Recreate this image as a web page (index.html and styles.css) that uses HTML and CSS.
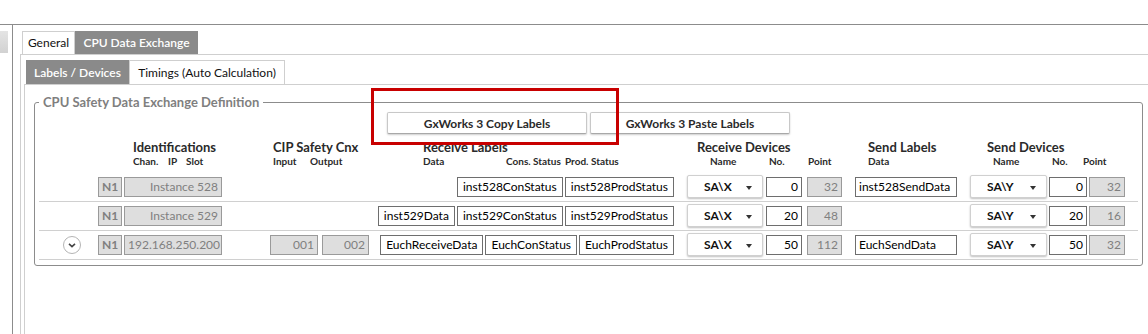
FILE: index.html
```html
<!DOCTYPE html>
<html lang="en">
<head>
    <meta charset="UTF-8">
    <title>CPU Data Exchange</title>
    <link rel="stylesheet" href="styles.css">
</head>
<body>
    <div class="window">
        <div class="sidebar"><div class="side-tab"></div></div>
        <div class="main">
            <div class="tabs">
                <div class="tab tab-general">General</div>
                <div class="tab tab-cpu active">CPU Data Exchange</div>
            </div>
            <div class="panel">
                <div class="tabs sub">
                    <div class="tab tab-labels active">Labels / Devices</div>
                    <div class="tab tab-timings">Timings (Auto Calculation)</div>
                </div>
                <div class="subpanel">
                    <fieldset class="group">
                        <legend>CPU Safety Data Exchange Definition</legend>

                        <div class="actions">
                            <span class="marked">
                                <button class="btn">GxWorks 3 Copy Labels</button>
                                <span class="highlight"></span>
                            </span>
                            <button class="btn">GxWorks 3 Paste Labels</button>
                        </div>

                        <div class="head">
                            <div class="hg hg-id">
                                <div class="ht">Identifications</div>
                                <div class="hs"><span class="w35">Chan.</span><span class="w18">IP</span><span>Slot</span></div>
                            </div>
                            <div class="hg hg-cip">
                                <div class="ht">CIP Safety Cnx</div>
                                <div class="hs"><span class="w37">Input</span><span>Output</span></div>
                            </div>
                            <div class="hg hg-rl">
                                <div class="ht">Receive Labels</div>
                                <div class="hs"><span class="w83">Data</span><span class="w59">Cons. Status</span><span>Prod. Status</span></div>
                            </div>
                            <div class="hg hg-rd">
                                <div class="ht">Receive Devices</div>
                                <div class="hs ind13"><span class="w59">Name</span><span class="w39">No.</span><span>Point</span></div>
                            </div>
                            <div class="hg hg-sl">
                                <div class="ht">Send Labels</div>
                                <div class="hs"><span>Data</span></div>
                            </div>
                            <div class="hg hg-sd">
                                <div class="ht">Send Devices</div>
                                <div class="hs ind6"><span class="w59">Name</span><span class="w31">No.</span><span>Point</span></div>
                            </div>
                        </div>

                        <div class="row">
                            <span class="c-chev"></span>
                            <span class="c-chan field off">N1</span>
                            <span class="c-id field off">Instance 528</span>
                            <span class="c-in"></span>
                            <span class="c-out"></span>
                            <span class="c-rl">
                                <span class="field lbl">inst528ConStatus</span>
                                <span class="field lbl">inst528ProdStatus</span>
                            </span>
                            <span class="c-sel1 select">SA\X<i class="caret"></i></span>
                            <span class="c-no1 field num">0</span>
                            <span class="c-pt1 field off num">32</span>
                            <span class="c-sl field">inst528SendData</span>
                            <span class="c-sel2 select">SA\Y<i class="caret"></i></span>
                            <span class="c-no2 field num">0</span>
                            <span class="c-pt2 field off num">32</span>
                        </div>

                        <div class="row">
                            <span class="c-chev"></span>
                            <span class="c-chan field off">N1</span>
                            <span class="c-id field off">Instance 529</span>
                            <span class="c-in"></span>
                            <span class="c-out"></span>
                            <span class="c-rl">
                                <span class="field lbl">inst529Data</span>
                                <span class="field lbl">inst529ConStatus</span>
                                <span class="field lbl">inst529ProdStatus</span>
                            </span>
                            <span class="c-sel1 select">SA\X<i class="caret"></i></span>
                            <span class="c-no1 field num">20</span>
                            <span class="c-pt1 field off num">48</span>
                            <span class="c-sl"></span>
                            <span class="c-sel2 select">SA\Y<i class="caret"></i></span>
                            <span class="c-no2 field num">20</span>
                            <span class="c-pt2 field off num">16</span>
                        </div>

                        <div class="row">
                            <span class="c-chev">
                                <svg width="18" height="18" viewBox="0 0 18 18">
                                    <circle cx="9" cy="9" r="8.5" fill="#fff" stroke="#b4b4b4"/>
                                    <path d="M6 7.8 L9 10.6 L12 7.8" fill="none" stroke="#444" stroke-width="1.6"/>
                                </svg>
                            </span>
                            <span class="c-chan field off">N1</span>
                            <span class="c-id field off">192.168.250.200</span>
                            <span class="c-in field off num">001</span>
                            <span class="c-out field off num">002</span>
                            <span class="c-rl">
                                <span class="field lbl">EuchReceiveData</span>
                                <span class="field lbl">EuchConStatus</span>
                                <span class="field lbl">EuchProdStatus</span>
                            </span>
                            <span class="c-sel1 select">SA\X<i class="caret"></i></span>
                            <span class="c-no1 field num">50</span>
                            <span class="c-pt1 field off num">112</span>
                            <span class="c-sl field">EuchSendData</span>
                            <span class="c-sel2 select">SA\Y<i class="caret"></i></span>
                            <span class="c-no2 field num">50</span>
                            <span class="c-pt2 field off num">32</span>
                        </div>
                    </fieldset>
                </div>
            </div>
        </div>
    </div>
</body>
</html>
```

FILE: styles.css
```css
body {
    margin: 0;
    font-family: "Lato", "Noto Sans", sans-serif;
    font-size: 12px;
    color: #1a1a1a;
    background: #fff;
}
.window {
    margin-top: 24px;
    border-top: 1px solid #8c8c8c;
    display: flex;
    height: 309px;
}
.sidebar {
    width: 12px;
    border-right: 1px solid #8c8c8c;
}
.side-tab {
    margin-top: 6px;
    width: 8px;
    height: 22px;
    background: linear-gradient(#e4e4e4, #d2d2d2);
}
.main {
    flex: 1;
    padding-top: 6px;
    display: flex;
    flex-direction: column;
}
.tabs {
    display: flex;
    padding-left: 9px;
}
.tab {
    box-sizing: border-box;
    height: 23px;
    line-height: 22px;
    text-align: center;
    border: 1px solid #cfcfcf;
    border-bottom: none;
    background: #fff;
    color: #111;
}
.tab.active {
    background: #8a8a8a;
    border-color: #8a8a8a;
    color: #fff;
    font-weight: 600;
}
.tab-general { width: 53px; }
.tab-cpu { width: 123px; }
.panel {
    flex: 1;
    margin-left: 7px;
    padding-top: 5px;
    border-top: 1px solid #cfcfcf;
    border-left: 1px solid #cfcfcf;
    display: flex;
    flex-direction: column;
}
.tabs.sub {
    padding-left: 5px;
}
.tabs.sub .tab {
    height: 24px;
    line-height: 23px;
}
.tab-labels { width: 103px; }
.tab-timings { width: 156px; }
.subpanel {
    flex: 1;
    margin-left: 3px;
    padding: 9px 5px 0 9px;
    border-top: 1px solid #cfcfcf;
    border-left: 1px solid #cfcfcf;
}
.group {
    margin: 0;
    padding: 2px 4px 5px;
    border: 1px solid #8c8c8c;
    border-radius: 3px;
}
.group legend {
    padding: 0 4px;
    font-size: 13px;
    line-height: 16px;
    font-weight: 700;
    color: #7f7f7f;
}
.actions {
    display: flex;
    justify-content: center;
    gap: 3px;
}
.marked {
    position: relative;
    display: flex;
}
.btn {
    box-sizing: border-box;
    width: 200px;
    height: 22px;
    padding: 0;
    font-family: inherit;
    font-size: 12px;
    font-weight: 700;
    color: #2a2a2a;
    background: #fff;
    border: 1px solid #c8c8c8;
    border-bottom-color: #a8a8a8;
    border-radius: 2px;
    box-shadow: 0 1px 2px rgba(0, 0, 0, 0.2);
}
.highlight {
    position: absolute;
    left: -16px;
    top: -24px;
    width: 248px;
    height: 57px;
    box-sizing: border-box;
    border: 3px solid #c80000;
    pointer-events: none;
}
.head {
    display: flex;
    height: 34px;
    margin-top: 5px;
    color: #2a2a2a;
    font-weight: 700;
}
.ht {
    font-size: 13px;
    line-height: 16px;
    white-space: nowrap;
}
.hs {
    display: flex;
    font-size: 10px;
    line-height: 13px;
    white-space: nowrap;
}
.hs span { flex: none; }
.hg-id { margin-left: 94px; width: 140px; }
.hg-cip { width: 150px; }
.hg-rl { width: 274px; }
.hg-rd { width: 171px; }
.hg-sl { width: 119px; }
.ind13 { padding-left: 13px; }
.ind6 { padding-left: 6px; }
.w18 { width: 18px; }
.w31 { width: 31px; }
.w35 { width: 35px; }
.w37 { width: 37px; }
.w39 { width: 39px; }
.w59 { width: 59px; }
.w83 { width: 83px; }
.row {
    display: flex;
    align-items: center;
    padding: 4px 0;
    border-bottom: 1px solid #d0d0d0;
}
.row > span { flex: none; }
.field {
    box-sizing: border-box;
    height: 20px;
    line-height: 18px;
    padding: 0 3px;
    border: 1px solid #6e6e6e;
    background: #fff;
    color: #000;
    white-space: nowrap;
    overflow: hidden;
}
.field.off {
    background: #dedede;
    border-color: #9a9a9a;
    color: #808080;
    text-align: right;
}
.num { text-align: right; }
.c-chan.off { text-align: center; padding: 0; font-weight: 700; }
.c-chev { width: 18px; height: 18px; margin-left: 24px; }
.c-chev svg { display: block; }
.c-chan { width: 24px; margin-left: 17px; }
.c-id { width: 98px; margin-left: 2px; }
.c-in { width: 48px; margin-left: 48px; }
.c-out { width: 47px; margin-left: 4px; }
.c-rl {
    width: 299px;
    margin-left: 6px;
    display: flex;
    justify-content: flex-end;
    gap: 2px;
}
.lbl { padding: 0 5px; }
.select {
    box-sizing: border-box;
    position: relative;
    height: 23px;
    line-height: 21px;
    margin: -2px 0 -1px;
    padding-left: 16px;
    font-weight: 700;
    color: #111;
    background: #fff;
    border: 1px solid #d0d0d0;
    border-radius: 2px;
    box-shadow: 0 1px 2px rgba(0, 0, 0, 0.25);
}
.caret {
    position: absolute;
    right: 10px;
    top: 10px;
    border-left: 3px solid transparent;
    border-right: 3px solid transparent;
    border-top: 4px solid #333;
}
.c-sel1 { width: 76px; margin-left: 13px; }
.c-no1 { width: 36px; margin-left: 3px; }
.c-pt1 { width: 35px; margin-left: 5px; }
.c-sl { width: 102px; margin-left: 13px; }
.c-sel2 { width: 77px; margin-left: 13px; }
.c-no2 { width: 38px; margin-left: 2px; }
.c-pt2 { width: 36px; margin-left: 2px; }
```
